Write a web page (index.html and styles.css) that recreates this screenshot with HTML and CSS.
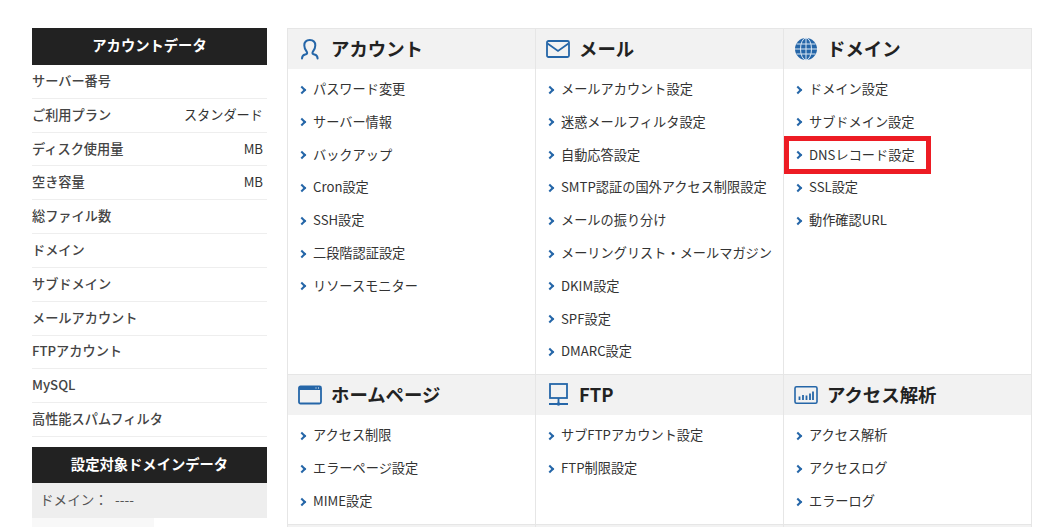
FILE: index.html
```html
<!DOCTYPE html>
<html lang="ja">
<head>
<meta charset="utf-8">
<title>サーバーパネル</title>
<link rel="stylesheet" href="styles.css">
</head>
<body>
<div class="page">
  <aside class="side">
    <h2 class="side-head">アカウントデータ</h2>
    <dl class="stats">
      <div class="stat"><dt>サーバー番号</dt><dd></dd></div>
      <div class="stat"><dt>ご利用プラン</dt><dd>スタンダード</dd></div>
      <div class="stat"><dt>ディスク使用量</dt><dd>MB</dd></div>
      <div class="stat"><dt>空き容量</dt><dd>MB</dd></div>
      <div class="stat"><dt>総ファイル数</dt><dd></dd></div>
      <div class="stat"><dt>ドメイン</dt><dd></dd></div>
      <div class="stat"><dt>サブドメイン</dt><dd></dd></div>
      <div class="stat"><dt>メールアカウント</dt><dd></dd></div>
      <div class="stat"><dt>FTPアカウント</dt><dd></dd></div>
      <div class="stat"><dt>MySQL</dt><dd></dd></div>
      <div class="stat"><dt>高性能スパムフィルタ</dt><dd></dd></div>
    </dl>
    <h2 class="side-head side-head-second">設定対象ドメインデータ</h2>
    <div class="domain-row">ドメイン： ----</div>
    <div class="domain-next"></div>
  </aside>
  <main class="panel">
    <section class="cell">
      <h3 class="cell-head">
        <svg class="icon" viewBox="0 0 24 24" fill="none" stroke="#2566a8" stroke-width="2"><path d="M4 21.500c0-2.500 1.200-3.700 3.200-4.100 1.800-.4 2.400-1.100 1.700-2.400C7.200 13 6.300 11 6.300 8.500 6.300 5 8.500 3 11.800 3s5.500 2 5.500 5.500c0 2.500-.9 4.500-2.600 6.500-.7 1.300-.1 2 1.700 2.400 2 .4 3.200 1.600 3.200 4.100" stroke-linecap="round"/></svg>
        <span class="cell-title">アカウント</span>
      </h3>
      <ul class="links">
        <li>パスワード変更</li><li>サーバー情報</li><li>バックアップ</li><li>Cron設定</li><li>SSH設定</li><li>二段階認証設定</li><li>リソースモニター</li>
      </ul>
    </section>
    <section class="cell">
      <h3 class="cell-head">
        <svg class="icon" viewBox="0 0 24 24" fill="none" stroke="#2566a8" stroke-width="1.800"><rect x="1" y="4" width="22" height="16" rx="1.500"/><path d="M1.500 6.500 12 14 22.500 6.500"/></svg>
        <span class="cell-title">メール</span>
      </h3>
      <ul class="links">
        <li>メールアカウント設定</li><li>迷惑メールフィルタ設定</li><li>自動応答設定</li><li>SMTP認証の国外アクセス制限設定</li><li>メールの振り分け</li><li>メーリングリスト・メールマガジン</li><li>DKIM設定</li><li>SPF設定</li><li>DMARC設定</li>
      </ul>
    </section>
    <section class="cell">
      <h3 class="cell-head">
        <svg class="icon" viewBox="0 0 24 24" fill="none"><circle cx="12" cy="12" r="11" fill="#2566a8"/><g stroke="#dce8f4" stroke-width="1"><path d="M1 12h22M2.500 7h19M2.500 17h19M12 1v22"/><ellipse cx="12" cy="12" rx="5.500" ry="11"/></g></svg>
        <span class="cell-title">ドメイン</span>
      </h3>
      <ul class="links">
        <li>ドメイン設定</li><li>サブドメイン設定</li><li class="marked">DNSレコード設定</li><li>SSL設定</li><li>動作確認URL</li>
      </ul>
    </section>
    <section class="cell">
      <h3 class="cell-head">
        <svg class="icon" viewBox="0 0 24 24" fill="none"><rect x="1" y="3.500" width="22" height="17" rx="1.500" stroke="#2566a8" stroke-width="1.800"/><path d="M1 4.500a1.500 1.500 0 0 1 1.500-1.500h19a1.500 1.500 0 0 1 1.500 1.500V7H1z" fill="#2566a8"/><path d="M17.500 5h1M20 5h1" stroke="#fff"/></svg>
        <span class="cell-title">ホームページ</span>
      </h3>
      <ul class="links">
        <li>アクセス制限</li><li>エラーページ設定</li><li>MIME設定</li>
      </ul>
    </section>
    <section class="cell">
      <h3 class="cell-head">
        <svg class="icon" viewBox="0 0 24 24" fill="none" stroke="#2566a8" stroke-width="1.800"><rect x="4" y="1" width="17" height="14"/><path d="M12.500 15v6M3 21h19"/><circle cx="12.500" cy="21" r="1.800" fill="#2566a8" stroke="none"/></svg>
        <span class="cell-title">FTP</span>
      </h3>
      <ul class="links">
        <li>サブFTPアカウント設定</li><li>FTP制限設定</li>
      </ul>
    </section>
    <section class="cell">
      <h3 class="cell-head">
        <svg class="icon" viewBox="0 0 24 24" fill="none"><rect x="1" y="3.800" width="22" height="16.400" rx="1.500" stroke="#2566a8" stroke-width="1.600"/><path d="M5.500 13.500V17M9 12v5M12.500 12.500V17M16 10.500V17M19 8.500V17" stroke="#2566a8" stroke-width="1.800"/></svg>
        <span class="cell-title">アクセス解析</span>
      </h3>
      <ul class="links">
        <li>アクセス解析</li><li>アクセスログ</li><li>エラーログ</li>
      </ul>
    </section>
    <section class="cell"><div class="cell-head"></div></section>
    <section class="cell"><div class="cell-head"></div></section>
    <section class="cell"><div class="cell-head"></div></section>
  </main>
</div>
</body>
</html>
```
FILE: styles.css
```css
html, body {
  margin: 0;
  height: 527px;
  overflow: hidden;
  background: #fff;
}
body {
  font-family: "Noto Sans CJK JP", "Noto Sans", sans-serif;
  font-size: 13.200px;
  color: #333;
}
.page {
  display: flex;
  align-items: flex-start;
  gap: 20px;
  padding: 28px 0 0 32px;
}
.side { width: 235px; flex: none; }
.side-head {
  margin: 0;
  height: 37px;
  line-height: 34px;
  background: #222;
  color: #fff;
  font-size: 14.300px;
  font-weight: 700;
  text-align: center;
}
.side-head-second { height: 36px; margin-top: 10px; }
.stats { margin: 0; }
.stat {
  display: flex;
  justify-content: space-between;
  align-items: center;
  box-sizing: border-box;
  height: 33.820px;
  border-bottom: 1px solid #eee;
  padding: 0 4px 2px 0;
}
.stat dt { font-weight: 500; color: #444; }
.stat dd { margin: 0; }
.domain-row {
  height: 35px;
  line-height: 33px;
  padding-left: 8px;
  background: #eee;
  color: #555;
  font-size: 13.600px;
  word-spacing: 4px;
}
.domain-next { width: 122px; height: 20px; background: #f8f8f8; }
.panel {
  flex: none;
  width: 744px;
  display: grid;
  grid-template-columns: repeat(3, 248px);
  border-right: 1px solid #e6e6e6;
}
.cell {
  border-top: 1px solid #e6e6e6;
  border-left: 1px solid #e6e6e6;
  box-sizing: border-box;
}
.cell-head {
  margin: 0;
  height: 40px;
  display: flex;
  align-items: center;
  gap: 9px;
  padding-left: 10px;
  background: #f2f2f2;
  color: #222;
  font-size: 18.400px;
  font-weight: 700;
}
.cell-title { padding-bottom: 3px; }
.icon { width: 24px; height: 24px; flex: none; }
.links {
  list-style: none;
  margin: 0;
  padding: 4.100px 0 6.100px;
}
.links li {
  position: relative;
  height: 32.800px;
  line-height: 32.800px;
  padding-left: 25px;
  white-space: nowrap;
}
.links li::before {
  content: "";
  position: absolute;
  left: 10.500px;
  top: 13.500px;
  width: 4px;
  height: 4px;
  border-top: 2.400px solid #2566a8;
  border-right: 2.400px solid #2566a8;
  transform: rotate(45deg);
  box-sizing: content-box;
}
.marked::after {
  content: "";
  position: absolute;
  left: 0;
  top: -2.700px;
  width: 147px;
  height: 38px;
  border: 5px solid #ed1c24;
  box-sizing: border-box;
}
```
